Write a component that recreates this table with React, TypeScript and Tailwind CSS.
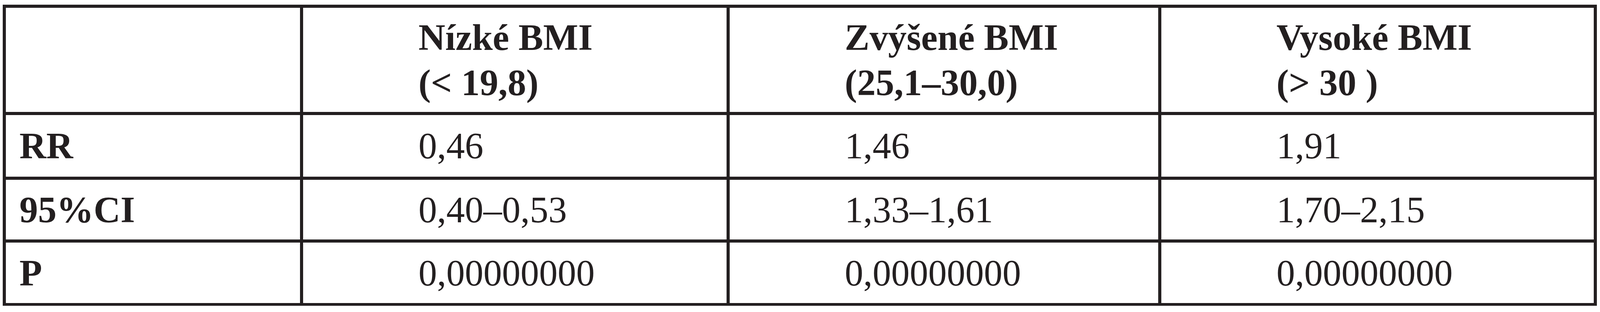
import React from "react";

const rows = [
  { label: "RR", values: ["0,46", "1,46", "1,91"], height: "h-[158px]" },
  { label: "95%CI", values: ["0,40–0,53", "1,33–1,61", "1,70–2,15"], height: "h-[153px]" },
  { label: "P", values: ["0,00000000", "0,00000000", "0,00000000"], height: "h-[155px]" },
];

const headers = [
  ["Nízké BMI", "(< 19,8)"],
  ["Zvýšené BMI", "(25,1–30,0)"],
  ["Vysoké BMI", "(> 30 )"],
];

export default function App() {
  return (
    <div className="w-full h-[800px] bg-white pt-[12px] pl-[7px] pr-[8px] font-['Liberation_Serif','Times_New_Roman',serif] text-[95px] leading-[116px] text-[#231f20]">
      <div className="grid w-full grid-cols-[1041fr_1497fr_1516fr_1530fr] gap-[8px] bg-[#231f20] p-[8px] pb-[7px]">
        {/* header row */}
        <div className="h-[267px] bg-white" />
        {headers.map(([top, bottom]) => (
          <div key={top} className="h-[267px] bg-white pl-[7.2vw] flex flex-col justify-center font-bold whitespace-nowrap">
            <span>{top}</span>
            <span>{bottom}</span>
          </div>
        ))}

        {rows.map((row) => (
          <React.Fragment key={row.label}>
            <div className={`${row.height} bg-white pl-[0.85vw] flex items-center font-bold`}>
              {row.label}
            </div>
            {row.values.map((v, i) => (
              <div key={i} className={`${row.height} bg-white pl-[7.2vw] flex items-center whitespace-nowrap`}>
                {v}
              </div>
            ))}
          </React.Fragment>
        ))}
      </div>
    </div>
  );
}
